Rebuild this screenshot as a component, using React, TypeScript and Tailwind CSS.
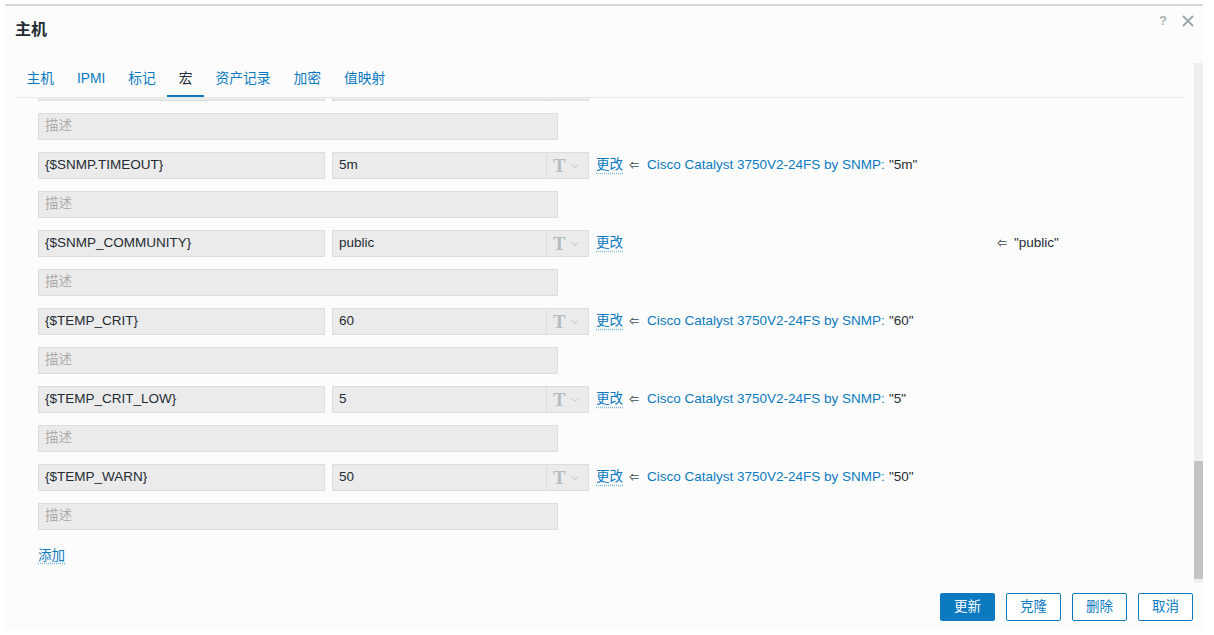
import { ChevronDown } from "lucide-react";

const font = { fontFamily: '"Liberation Sans", "Noto Sans CJK SC", sans-serif' };

type Macro = {
  name: string;
  value: string;
  template?: string;
  inherited: string;
};

const macros: Macro[] = [
  { name: "{$SNMP.TIMEOUT}", value: "5m", template: "Cisco Catalyst 3750V2-24FS by SNMP", inherited: '"5m"' },
  { name: "{$SNMP_COMMUNITY}", value: "public", inherited: '"public"' },
  { name: "{$TEMP_CRIT}", value: "60", template: "Cisco Catalyst 3750V2-24FS by SNMP", inherited: '"60"' },
  { name: "{$TEMP_CRIT_LOW}", value: "5", template: "Cisco Catalyst 3750V2-24FS by SNMP", inherited: '"5"' },
  { name: "{$TEMP_WARN}", value: "50", template: "Cisco Catalyst 3750V2-24FS by SNMP", inherited: '"50"' },
];

const tabs = ["主机", "IPMI", "标记", "宏", "资产记录", "加密", "值映射"];

function Field({ className, children }: { className: string; children?: React.ReactNode }) {
  return (
    <div
      className={`flex h-[27px] items-center border border-[#d9dee1] bg-[#ebebeb] px-[6px] text-[13.5px] text-[#1f2c33] ${className}`}
    >
      {children}
    </div>
  );
}

function ValueField({ value, picker = true }: { value: string; picker?: boolean }) {
  return (
    <div className="flex h-[27px] w-[257px] border border-[#d9dee1] bg-[#ebebeb] text-[13.5px] text-[#1f2c33]">
      <div className="flex flex-1 items-center px-[6px]">{value}</div>
      <div className="flex w-[42px] items-center gap-[3px] border-l border-[#d9dee1] pl-[6px]">
        {picker ? (
          <>
            <span
              className="text-[19px] font-bold leading-none text-[#b3bcc1]"
              style={{ fontFamily: '"Liberation Serif", serif' }}
            >
              T
            </span>
            <ChevronDown size={12} strokeWidth={1.8} className="text-[#b3bcc1]" />
          </>
        ) : null}
      </div>
    </div>
  );
}

function MacroRow({ m }: { m?: Macro }) {
  return (
    <div className="flex h-[27px] items-center">
      <Field className="w-[287px]">{m?.name}</Field>
      <div className="ml-[7px]">
        <ValueField value={m?.value ?? ""} picker={!!m} />
      </div>
      {m ? (
        <div className="ml-[7px] flex items-center whitespace-nowrap text-[13.5px]">
          <span className="text-[#0b7ac0] underline decoration-dotted decoration-[#7fb8e0] underline-offset-[3px]">
            更改
          </span>
          <span className={`${m.template ? "ml-[6px]" : "ml-[374px]"} text-[10px] leading-none text-[#3b4a52]`}>
            ⇐
          </span>
          {m.template ? (
            <span className="ml-[8px] text-[#0b7ac0]">{m.template}:</span>
          ) : null}
          <span className={`${m.template ? "ml-[4px]" : "ml-[7px]"} text-[#1f2c33]`}>{m.inherited}</span>
        </div>
      ) : null}
    </div>
  );
}

function DescRow() {
  return (
    <Field className="w-[520px]">
      <span className="text-[#adadad]">描述</span>
    </Field>
  );
}

export default function App() {
  return (
    <div className="h-[635px] w-[1214px] bg-white pl-[5px] pt-[4px]" style={font}>
      <div className="flex h-[626px] w-[1198px] flex-col border-t-2 border-[#d5d9dc] bg-[#fcfcfc]">
        <header className="flex h-[57px] items-start justify-between">
          <h1 className="pl-[10px] pt-[14px] text-[16px] font-bold leading-[20px] text-[#1f2c33]">主机</h1>
          <div className="flex items-center gap-[15px] pr-[9px] pt-[5px]">
            <span className="text-[13px] font-bold text-[#aab4b9]">?</span>
            <svg width="12" height="12" viewBox="0 0 12 12" className="text-[#9aa5ab]">
              <path d="M1 1 L11 11 M11 1 L1 11" stroke="currentColor" strokeWidth="1.8" />
            </svg>
          </div>
        </header>

        <div className="flex h-[520px]">
          <div className="flex flex-1 flex-col pl-[10px] pr-[11px]">
            <nav className="flex h-[35px] border-b border-[#e8e8e8] text-[13.75px]">
              {tabs.map((t) => (
                <div
                  key={t}
                  className={`flex h-[34px] items-center px-[11.5px] pt-[1px] ${
                    t === "宏"
                      ? "border-b-2 border-[#0b7ac0] text-[#1f2c33]"
                      : "border-b-2 border-transparent text-[#0b7ac0]"
                  }`}
                >
                  {t}
                </div>
              ))}
            </nav>
            <div className="flex-1 overflow-hidden">
              <div className="-mt-[24px] flex flex-col gap-[12px] pl-[23px]">
                <MacroRow />
                {macros.map((m) => (
                  <div key={m.name} className="contents">
                    <DescRow />
                    <MacroRow m={m} />
                  </div>
                ))}
                <DescRow />
                <div className="pt-[4px] text-[13.5px] leading-[20px]">
                  <span className="text-[#0b7ac0] underline decoration-dotted decoration-[#7fb8e0] underline-offset-[3px]">
                    添加
                  </span>
                </div>
              </div>
            </div>
          </div>
          <div className="flex w-[9px] flex-col bg-[#efefef]">
            <div className="h-[398px]" />
            <div className="h-[118px] bg-[#c4c4c4]" />
          </div>
        </div>

        <footer className="flex justify-end gap-[11px] pr-[10px] pt-[10px] text-[13.5px]">
          <button className="h-[28px] w-[55px] rounded-[2px] bg-[#0b7ac0] text-white">更新</button>
          <button className="h-[28px] w-[55px] rounded-[2px] border border-[#0b7ac0] bg-white text-[#0b7ac0]">克隆</button>
          <button className="h-[28px] w-[55px] rounded-[2px] border border-[#0b7ac0] bg-white text-[#0b7ac0]">删除</button>
          <button className="h-[28px] w-[55px] rounded-[2px] border border-[#0b7ac0] bg-white text-[#0b7ac0]">取消</button>
        </footer>
      </div>
    </div>
  );
}
